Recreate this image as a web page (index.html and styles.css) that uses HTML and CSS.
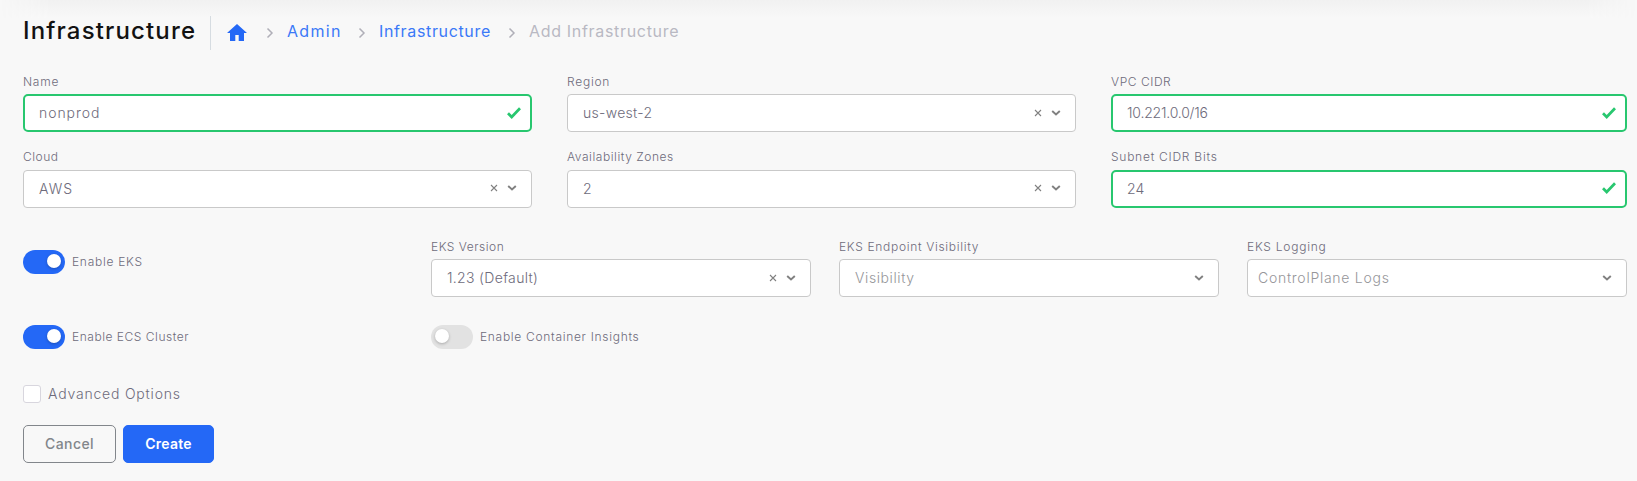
FILE: index.html
```
<!DOCTYPE html>
<html lang="en">
<head>
<meta charset="utf-8">
<title>Add Infrastructure</title>
<link rel="stylesheet" href="styles.css">
</head>
<body>
<svg class="symbols" aria-hidden="true">
  <symbol id="home" viewBox="0 0 20 17"><path d="M10 0 0 9h3v8h5.300v-6h3.400v6H17V9h3z" fill="#2468f6"/></symbol>
  <symbol id="sep" viewBox="0 0 8 12"><path d="m1.500 1.500 4.500 4.500-4.500 4.500" fill="none" stroke="#b0afb8" stroke-width="1.500"/></symbol>
  <symbol id="check" viewBox="0 0 14 12"><path d="m1 6.200 3.700 3.800L13 1.200" fill="none" stroke="#28c76f" stroke-width="2.700"/></symbol>
  <symbol id="clear" viewBox="0 0 8 8"><path d="m1 1 6 6m0-6-6 6" fill="none" stroke="#808080" stroke-width="1.100"/></symbol>
  <symbol id="down" viewBox="0 0 10 6"><path d="m1.200 1 3.800 3.500L8.800 1" fill="none" stroke="#808080" stroke-width="1.900"/></symbol>
</svg>
<div class="navbar-shadow"></div>
<main class="page">
  <header class="header">
    <h1 class="title">Infrastructure</h1>
    <nav class="breadcrumb">
      <svg class="home"><use href="#home"/></svg>
      <svg class="sep sep-first"><use href="#sep"/></svg>
      <a class="crumb crumb-admin">Admin</a>
      <svg class="sep"><use href="#sep"/></svg>
      <a class="crumb crumb-infra">Infrastructure</a>
      <svg class="sep"><use href="#sep"/></svg>
      <span class="crumb crumb-current">Add Infrastructure</span>
    </nav>
  </header>
  <section class="grid-main">
    <div class="field"><label class="label l-name">Name</label><div class="control valid"><span class="value v-name">nonprod</span><svg class="check"><use href="#check"/></svg></div></div>
    <div class="field"><label class="label l-region">Region</label><div class="control"><span class="value v-region">us-west-2</span><svg class="clear"><use href="#clear"/></svg><svg class="down"><use href="#down"/></svg></div></div>
    <div class="field"><label class="label l-vpc">VPC CIDR</label><div class="control valid"><span class="value v-vpc">10.221.0.0/16</span><svg class="check"><use href="#check"/></svg></div></div>
    <div class="field"><label class="label l-cloud">Cloud</label><div class="control raised"><span class="value v-cloud">AWS</span><svg class="clear"><use href="#clear"/></svg><svg class="down"><use href="#down"/></svg></div></div>
    <div class="field"><label class="label l-zones">Availability Zones</label><div class="control raised"><span class="value v-zones">2</span><svg class="clear"><use href="#clear"/></svg><svg class="down"><use href="#down"/></svg></div></div>
    <div class="field"><label class="label l-subnet">Subnet CIDR Bits</label><div class="control valid raised"><span class="value v-subnet">24</span><svg class="check"><use href="#check"/></svg></div></div>
  </section>
  <section class="grid-eks">
    <div class="switch-row"><span class="switch on"></span><span class="switch-label s-eks">Enable EKS</span></div>
    <div class="field"><label class="label l-version">EKS Version</label><div class="control"><span class="value v-version">1.23 (Default)</span><svg class="clear"><use href="#clear"/></svg><svg class="down"><use href="#down"/></svg></div></div>
    <div class="field"><label class="label l-endpoint">EKS Endpoint Visibility</label><div class="control"><span class="value placeholder v-visibility">Visibility</span><svg class="down"><use href="#down"/></svg></div></div>
    <div class="field"><label class="label l-logging">EKS Logging</label><div class="control multi"><span class="value placeholder v-logs">ControlPlane Logs</span><svg class="down"><use href="#down"/></svg></div></div>
  </section>
  <section class="grid-ecs">
    <div class="switch-row"><span class="switch on"></span><span class="switch-label s-ecs">Enable ECS Cluster</span></div>
    <div class="switch-row"><span class="switch"></span><span class="switch-label s-insights">Enable Container Insights</span></div>
  </section>
  <div class="advanced"><span class="checkbox"></span><span class="advanced-label">Advanced Options</span></div>
  <div class="actions"><button class="button cancel"><span class="b-cancel">Cancel</span></button><button class="button create"><span class="b-create">Create</span></button></div>
</main>
</body>
</html>
```
FILE: styles.css
```
* { box-sizing: border-box; }
body { margin: 0; height: 481px; overflow: hidden; background: #f8f8f8; font-family: Inter, "Open Sans", sans-serif; font-weight: 300; color: #6e6b7b; }
svg { display: block; flex: none; }
.symbols { position: absolute; width: 0; height: 0; }
.navbar-shadow { position: absolute; top: 0; left: 0; width: 100%; height: 18px; background: linear-gradient(#f1f1f1, #f8f8f8); -webkit-mask-image: linear-gradient(90deg, transparent, #000 50px, #000 calc(100% - 50px), transparent); mask-image: linear-gradient(90deg, transparent, #000 50px, #000 calc(100% - 50px), transparent); }
.page { position: relative; padding: 16px 10px 0 23px; }
.header { display: flex; height: 34px; align-items: center; }
.title { margin: 0; width: 188px; height: 34px; border-right: 1px solid #d6dce1; font-size: 24px; line-height: 30px; font-weight: 500; letter-spacing: 1.15px; color: #121212; white-space: nowrap; }
.breadcrumb { display: flex; align-items: center; padding-left: 16px; font-size: 16px; font-weight: 400; line-height: 24px; height: 34px; padding-bottom: 4px; }
.home { width: 20px; height: 17px; margin-top: 3px; }
.sep { width: 8px; height: 12px; margin: 4px 13px 0 17px; }
.sep-first { margin-left: 19px; }
.crumb { color: #3b79f7; white-space: nowrap; }
.crumb-admin { width: 54px; letter-spacing: 1.3px; }
.crumb-infra { width: 112px; letter-spacing: .65px; }
.crumb-current { color: #b9b9c3; letter-spacing: .68px; }
.grid-main { display: grid; grid-template-columns: 509px 509px 516px; grid-template-rows: 60px 61px; column-gap: 35px; row-gap: 15px; margin-top: 22px; }
.field { display: flex; flex-direction: column; }
.label { height: 22px; line-height: 20px; font-size: 12px; letter-spacing: .55px; white-space: nowrap; }
.grid-main .field { justify-content: space-between; }
.control { display: flex; align-items: center; height: 38px; padding: 0 14px 0 15px; border: 1px solid #c9c9c9; border-radius: 4px; background: #fff; }
.valid { border: 2px solid #28c76f; border-radius: 5px; padding: 0 9px 0 14px; }
.raised svg { margin-bottom: 2px; }
.multi { padding-left: 10px; }
.value { font-size: 14px; line-height: 20px; margin-right: auto; white-space: nowrap; }
.placeholder { color: #96969a; }
.check { width: 14px; height: 12px; }
.clear { width: 8px; height: 8px; margin-right: 9px; }
.down { width: 10px; height: 6px; }
.l-name, .l-region { letter-spacing: .75px; }
.l-cloud { letter-spacing: .5px; }
.l-subnet { letter-spacing: .75px; }
.l-logging { letter-spacing: .75px; }
.l-version { letter-spacing: .5px; }
.l-endpoint { letter-spacing: .68px; }
.v-name { letter-spacing: .95px; }
.v-region { letter-spacing: .3px; }
.v-vpc { letter-spacing: -.2px; }
.v-cloud { letter-spacing: 1px; }
.v-subnet { letter-spacing: .2px; }
.v-version { letter-spacing: .33px; }
.v-visibility { letter-spacing: .6px; }
.v-logs { letter-spacing: .73px; }
.grid-eks, .grid-ecs { display: grid; grid-template-columns: repeat(4, 380px); column-gap: 28px; }
.grid-eks { margin-top: 29px; height: 61px; }
.switch-row { display: flex; align-items: center; height: 24px; }
.grid-eks .switch-row { margin-top: 13px; }
.switch { display: flex; align-items: center; width: 42px; height: 24px; padding: 0 4px; border-radius: 12px; background: #e2e2e2; }
.switch::before { content: ""; width: 14px; height: 14px; margin-top: -2px; border-radius: 50%; background: #fff; box-shadow: 0 1px 3px rgba(0,0,0,.25); }
.on { justify-content: flex-end; background: #2468f6; }
.switch-label { margin-left: 7px; font-size: 12px; line-height: 20px; letter-spacing: .53px; white-space: nowrap; }
.s-eks { letter-spacing: .72px; }
.s-insights { letter-spacing: .7px; }
.grid-ecs { margin-top: 27px; }
.advanced { display: flex; align-items: center; margin-top: 36px; height: 18px; }
.checkbox { width: 18px; height: 18px; border: 1px solid #d8d6de; border-radius: 3px; background: #fff; }
.advanced-label { margin: 0 0 2px 7px; font-size: 14px; letter-spacing: .8px; white-space: nowrap; }
.actions { display: flex; gap: 7px; margin-top: 22px; }
.button { display: flex; align-items: center; justify-content: center; height: 38px; padding: 0; border: 1px solid #82868b; border-radius: 5px; font: 500 14px/20px Inter, sans-serif; white-space: nowrap; }
.cancel { width: 93px; background: transparent; color: #82868b; letter-spacing: .4px; }
.create { width: 91px; background: #2468f6; border-color: #2468f6; color: #fff; font-weight: 600; letter-spacing: .25px; }
```
